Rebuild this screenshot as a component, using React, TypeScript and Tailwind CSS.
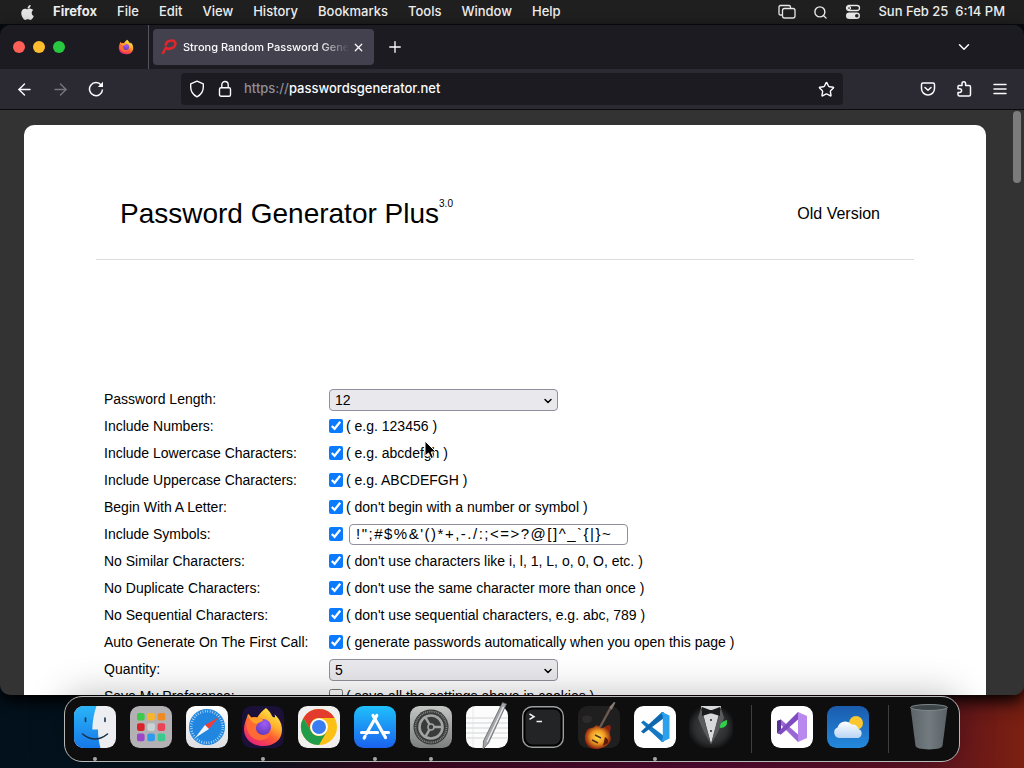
import { useState } from 'react'
import type { ReactNode } from 'react'
import { ArrowLeft, ArrowRight, ChevronDown, Menu, Plus, Search, Star, X } from 'lucide-react'
import { FaApple } from 'react-icons/fa'

const menus = ['File', 'Edit', 'View', 'History', 'Bookmarks', 'Tools', 'Window', 'Help']

function FirefoxLogo({ id, className }: { id: string; className?: string }) {
  return (
    <svg viewBox="0 0 42 42" width="42" height="42" className={className} aria-hidden="true">
      <defs>
        <linearGradient id={`${id}-body`} x1="0.85" y1="0.05" x2="0.25" y2="1">
          <stop offset="0" stopColor="#fff04a" />
          <stop offset="0.35" stopColor="#ffb02e" />
          <stop offset="0.6" stopColor="#ff5a36" />
          <stop offset="1" stopColor="#e6207c" />
        </linearGradient>
        <radialGradient id={`${id}-globe`} cx="0.6" cy="0.3" r="0.8">
          <stop offset="0" stopColor="#a05cf5" />
          <stop offset="1" stopColor="#5a35b8" />
        </radialGradient>
      </defs>
      <path
        d="M24 2c3 3 5 5 6 8 1 1 2 2 3 1 0-1 0-2-1-3 5 4 8 9 8 16 0 10-8 16-19 16S2 33 2 23c0-5 2-9 3-12l1-3c1 1 2 3 2 4 2-1 5-1 7 0 2-4 5-7 9-10z"
        fill={`url(#${id}-body)`}
      />
      <circle cx="21" cy="21" r="8" fill={`url(#${id}-globe)`} />
      <path
        d="M5 13c3-2 8-3 11-1 2 0 4 0 5 2-1 2-4 2-6 4 0 2-1 2-1 4 0 4 3 7 7 7 3 0 6-1 8-4-1 7-7 10-13 9C7 32 3 23 5 13z"
        fill="#ff6a35"
      />
      <path d="M6 8c2 1 3 3 3 4 3-1 6-1 8 0 2 0 3 1 4 2-1 2-4 2-6 4-4-1-8-3-9-10z" fill="#ffa02b" />
    </svg>
  )
}

function MenuBar() {
  return (
    <header className="flex h-6 shrink-0 items-center bg-[#1f1f1f] px-[19px] text-[13px] font-medium text-[#ededed]">
      <FaApple size={17} className="mr-[17px] text-[#e4e4e4]" />
      <nav className="flex gap-5">
        <button className="font-bold">Firefox</button>
        {menus.map((m) => (
          <button key={m}>{m}</button>
        ))}
      </nav>
      <div className="ml-auto flex items-center gap-[17px]">
        <svg width="18" height="16" viewBox="0 0 18 16" fill="none" stroke="#e8e8e8" strokeWidth="1.3">
          <path d="M4 11H2.500Q1 11 1 9.500V3Q1 1.500 2.500 1.500H11Q12.500 1.500 12.500 3V4" />
          <rect x="4.500" y="4.500" width="12.500" height="9.500" rx="2" />
        </svg>
        <Search size={15} strokeWidth={2.2} />
        <svg width="16" height="16" viewBox="0 0 16 16" fill="none" stroke="#e8e8e8" strokeWidth="1.300">
          <rect x="1.500" y="1.500" width="13" height="5" rx="2.500" />
          <circle cx="4" cy="4" r="1.500" />
          <rect x="1" y="8.500" width="14" height="6.500" rx="3.200" fill="#e8e8e8" stroke="none" />
          <circle cx="11.800" cy="11.700" r="1.800" fill="#222" stroke="none" />
        </svg>
        <span className="whitespace-pre">Sun Feb 25  6:14 PM</span>
      </div>
    </header>
  )
}

function TabStrip() {
  return (
    <div className="flex h-11 items-center bg-[#1c1b22] text-[#fbfbfe]">
      <div className="flex gap-2 pl-[13px]">
        <button aria-label="Close window" className="size-3 rounded-full bg-[#fe5f57]" />
        <button aria-label="Minimize window" className="size-3 rounded-full bg-[#febc2e]" />
        <button aria-label="Zoom window" className="size-3 rounded-full bg-[#28c840]" />
      </div>
      <button aria-label="Firefox View" className="ml-[53px] mr-[14px]">
        <FirefoxLogo id="fx-tab" className="size-4" />
      </button>
      <div className="mr-1 h-full w-px bg-[#55545c]" />
      <div className="flex h-9 w-[221px] items-center rounded-sm bg-[#42414d] pl-2">
        <svg width="16" height="16" viewBox="0 0 16 16" fill="none" stroke="#e0262c" strokeWidth="2.600">
          <path d="M1.500 15L5.500 7.500" />
          <path d="M4.500 6.500C5 3 8 1.500 11 1.500S15 4 14 6.500 9 10.500 4.500 9.500" />
        </svg>
        <span className="ml-[6px] w-[166px] overflow-hidden whitespace-nowrap text-[11px] font-medium [mask-image:linear-gradient(to_right,#000_82%,transparent)]">
          Strong Random Password Generator
        </span>
        <button aria-label="Close tab" className="ml-[3px]">
          <X size={13} strokeWidth={2.2} />
        </button>
      </div>
      <button aria-label="New tab" className="ml-3">
        <Plus size={18} strokeWidth={1.8} />
      </button>
      <button aria-label="List all tabs" className="ml-auto mr-[51px]">
        <ChevronDown size={18} strokeWidth={2} />
      </button>
    </div>
  )
}

function ToolButton({ label, children }: { label: string; children: ReactNode }) {
  return (
    <button aria-label={label} className="flex h-8 w-9 items-center justify-center">
      {children}
    </button>
  )
}

function Toolbar() {
  const [url, setUrl] = useState('https://passwordsgenerator.net')
  return (
    <div className="flex h-[41px] items-center border-b border-[#0c0c0d] bg-[#2b2a33] px-[6px] text-[#fbfbfe]">
      <ToolButton label="Back">
        <ArrowLeft size={19} strokeWidth={1.8} />
      </ToolButton>
      <ToolButton label="Forward">
        <ArrowRight size={19} strokeWidth={1.8} className="text-[#76757d]" />
      </ToolButton>
      <ToolButton label="Reload">
        <svg width="16" height="16" viewBox="0 0 16 16" fill="none" stroke="currentColor" strokeWidth="1.500">
          <path d="M13.200 4.200A6.500 6.500 0 1 0 14.500 8.500" />
          <path d="M15 .8V6H9.800z" fill="currentColor" stroke="none" />
        </svg>
      </ToolButton>
      <div className="mx-[67px] flex h-8 flex-1 items-center rounded bg-[#1c1b22] px-2">
        <svg width="16" height="18" viewBox="0 0 16 18" fill="none" stroke="currentColor" strokeWidth="1.400">
          <path d="M8 1.200L14.300 3.800V7C14.300 11.500 12 14.800 8 16.800C4 14.800 1.700 11.500 1.700 7V3.800z" strokeLinejoin="round" />
        </svg>
        <svg width="14" height="18" viewBox="0 0 14 18" fill="none" stroke="currentColor" strokeWidth="1.400" className="ml-[13px]">
          <rect x="1.500" y="7.800" width="11" height="8.400" rx="1.500" />
          <path d="M3.800 7.800V4.700A3.200 3.200 0 0 1 10.200 4.700V7.800" />
        </svg>
        <div className="relative ml-3 flex-1 text-[13px]">
          <input
            aria-label="Address"
            className="w-full bg-transparent font-medium text-transparent caret-white outline-none"
            value={url}
            onChange={(e) => setUrl(e.target.value)}
          />
          <span aria-hidden="true" className="pointer-events-none absolute inset-0 flex items-center font-medium text-[#fbfbfe]">
            <span className="text-[#8f8e96]">{url.slice(0, 8)}</span>
            {url.slice(8)}
          </span>
        </div>
        <button aria-label="Bookmark this page">
          <Star size={17} strokeWidth={2} />
        </button>
      </div>
      <ToolButton label="Save to Pocket">
        <svg width="16" height="16" viewBox="0 0 16 16" fill="none" stroke="currentColor" strokeWidth="1.500" strokeLinecap="round">
          <path d="M3 2H13Q14.500 2 14.500 3.500V7.500A6.500 6.500 0 0 1 1.500 7.500V3.500Q1.500 2 3 2z" />
          <path d="M5 6.500L8 9.300L11 6.500" strokeLinejoin="round" />
        </svg>
      </ToolButton>
      <ToolButton label="Extensions">
        <svg width="16" height="18" viewBox="0 0 16 18" fill="none" stroke="currentColor" strokeWidth="1.500" strokeLinejoin="round">
          <path d="M2 8.500V6.500Q2 5.500 3 5.500H6V3.500A1.800 1.800 0 0 1 9.600 3.500V5.500H13Q14.500 5.500 14.500 7V14.500Q14.500 16 13 16H3.500Q2 16 2 14.500V12.500H3.700A1.900 1.900 0 0 0 3.700 8.700H2z" />
        </svg>
      </ToolButton>
      <ToolButton label="Open application menu">
        <svg width="14" height="12" viewBox="0 0 14 12" stroke="currentColor" strokeWidth="1.500" strokeLinecap="round">
          <path d="M1 1.500H13M1 6H13M1 10.500H13" />
        </svg>
      </ToolButton>
    </div>
  )
}

function Picker({ id, value, options }: { id: string; value: string; options: string[] }) {
  return (
    <div className="relative">
      <select
        id={id}
        defaultValue={value}
        className="block h-[22px] w-[229px] appearance-none rounded border border-[#8f8f9d] bg-[#e9e9ed] pl-[5px] text-[14px] leading-5"
      >
        {options.map((o) => (
          <option key={o}>{o}</option>
        ))}
      </select>
      <ChevronDown size={12} strokeWidth={3} className="pointer-events-none absolute right-1 top-[6px]" />
    </div>
  )
}

const rows = [
  { id: 'numbers', label: 'Include Numbers:', hint: '( e.g. 123456 )' },
  { id: 'lowercase', label: 'Include Lowercase Characters:', hint: '( e.g. abcdefgh )' },
  { id: 'uppercase', label: 'Include Uppercase Characters:', hint: '( e.g. ABCDEFGH )' },
  { id: 'begin', label: 'Begin With A Letter:', hint: "( don't begin with a number or symbol )" },
  { id: 'symbols', label: 'Include Symbols:' },
  { id: 'similar', label: 'No Similar Characters:', hint: "( don't use characters like i, l, 1, L, o, 0, O, etc. )" },
  { id: 'duplicate', label: 'No Duplicate Characters:', hint: "( don't use the same character more than once )" },
  { id: 'sequential', label: 'No Sequential Characters:', hint: "( don't use sequential characters, e.g. abc, 789 )" },
  { id: 'auto', label: 'Auto Generate On The First Call:', hint: '( generate passwords automatically when you open this page )' },
]

function Row({ id, label, children }: { id: string; label: string; children: ReactNode }) {
  return (
    <div className="flex h-[27px] items-center whitespace-nowrap">
      <label htmlFor={id} className="w-[225px] shrink-0">{label}</label>
      {children}
    </div>
  )
}

function Check({ id, hint, off }: { id: string; hint?: string; off?: boolean }) {
  return (
    <>
      <input id={id} type="checkbox" defaultChecked={!off} className="mb-[2px] mr-[3px] size-[14px] accent-[#0a7aff]" />
      {hint && <label htmlFor={id}>{hint}</label>}
    </>
  )
}

function GeneratorPage() {
  return (
    <main className="flex min-h-0 flex-1 overflow-hidden bg-[#333333] pr-[3px] font-['Liberation_Sans',Arial,sans-serif] text-black">
      <div className="ml-6 mr-[27px] mt-[15px] flex-1 rounded-t-[10px] bg-white px-18">
        <div className="flex h-[135px] items-center justify-between border-b border-[#dddddd] pl-6 pr-[34px] pt-11">
          <h1 className="text-[28px] leading-8">
            Password Generator Plus<sup className="-top-4 text-[10px]">3.0</sup>
          </h1>
          <a href="#old" className="text-base">Old Version</a>
        </div>
        <form className="pl-2 pt-[126px] text-[14px]" onSubmit={(e) => e.preventDefault()}>
          <Row id="length" label="Password Length:">
            <Picker id="length" value="12" options={['6', '8', '10', '12', '16', '20', '32']} />
          </Row>
          {rows.map((r) => (
            <Row key={r.id} id={r.id} label={r.label}>
              <Check id={r.id} hint={r.hint} />
              {r.id === 'symbols' && (
                <input
                  type="text"
                  aria-label="Symbols"
                  defaultValue={'!";#$%&\'()*+,-./:;<=>?@[]^_`{|}~'}
                  className="ml-[3px] h-[21px] w-[279px] rounded-sm border border-[#8f8f9d] px-[6px] text-[15px] tracking-widest"
                />
              )}
            </Row>
          ))}
          <Row id="quantity" label="Quantity:">
            <Picker id="quantity" value="5" options={['1', '5', '10', '20']} />
          </Row>
          <Row id="save" label="Save My Preference:">
            <Check id="save" off hint="( save all the settings above in cookies )" />
          </Row>
        </form>
      </div>
      <div className="mt-px h-[72px] w-2 shrink-0 rounded-full bg-[#7b7b7b]" />
    </main>
  )
}

function Tile({ name, running, children }: { name: string; running?: boolean; children: ReactNode }) {
  return (
    <button aria-label={name} className="relative size-[42px] shrink-0">
      <svg viewBox="0 0 42 42" className="size-full overflow-visible">{children}</svg>
      {running && <span className="absolute -bottom-[13px] left-[19px] size-1 rounded-full bg-[#a8a8a8]" />}
    </button>
  )
}

const launchpad = ['#3fc94a', '#f7b52c', '#f08a24', '#d8232a', '#c9d3d3', '#ea4257', '#9a48c9', '#2f9bea', '#3cc98e']

function Dock() {
  return (
    <footer className="relative z-10 mx-auto mb-[6px] mt-px flex h-[66px] shrink-0 gap-[14px] rounded-[18px] border border-[#b9b9b9] bg-[#0e0e0f] px-[9px] pt-[9px] shadow-[0_-2px_36px_rgba(0,0,0,0.25)]">
      <svg className="absolute size-0" aria-hidden="true">
        <defs>
          <linearGradient id="finder" x2="0" y2="1"><stop stopColor="#2bb5f8" /><stop offset="1" stopColor="#1678e8" /></linearGradient>
          <linearGradient id="paper" x2="0" y2="1"><stop stopColor="#ffffff" /><stop offset="1" stopColor="#dedee2" /></linearGradient>
          <linearGradient id="store" x2="0" y2="1"><stop stopColor="#1fc0fb" /><stop offset="1" stopColor="#1a62ee" /></linearGradient>
          <linearGradient id="steel" x2="0" y2="1"><stop stopColor="#c4c6c4" /><stop offset="1" stopColor="#7d7f7e" /></linearGradient>
          <radialGradient id="suit" r="0.55"><stop stopColor="#4a4b4c" /><stop offset="0.7" stopColor="#2c2d2e" /><stop offset="1" stopColor="#0e0e0f" /></radialGradient>
          <linearGradient id="sky" x2="0" y2="1"><stop stopColor="#1b5cae" /><stop offset="1" stopColor="#2389dc" /></linearGradient>
          <linearGradient id="cloud" x2="0" y2="1"><stop stopColor="#ffffff" /><stop offset="1" stopColor="#b9d6f5" /></linearGradient>
          <linearGradient id="bin"><stop stopColor="#5c6468" /><stop offset="0.5" stopColor="#727b7f" /><stop offset="1" stopColor="#596165" /></linearGradient>
          <radialGradient id="burst"><stop stopColor="#ffe04e" /><stop offset="0.55" stopColor="#ef9822" /><stop offset="1" stopColor="#8c2410" /></radialGradient>
        </defs>
      </svg>
      <Tile name="Finder" running>
        <rect width="42" height="42" rx="9.500" fill="#eceef2" />
        <path d="M9.500 0H22.500C20 7 18.500 15 18.300 23.500H24C24 30 25 37 26.500 42H9.500A9.500 9.500 0 0 1 0 32.500V9.500A9.500 9.500 0 0 1 9.500 0z" fill="url(#finder)" />
        <path d="M11.500 12V15.500M31 12V15.500" stroke="#16324c" strokeWidth="1.600" strokeLinecap="round" />
        <path d="M8.500 28Q21 38 33.500 28" fill="none" stroke="#1b2f44" strokeWidth="1.600" strokeLinecap="round" />
      </Tile>
      <Tile name="Launchpad">
        <rect width="42" height="42" rx="9.500" fill="#b3b1b3" />
        {launchpad.map((c, i) => (
          <rect key={c} x={7 + (i % 3) * 10.3} y={7 + Math.floor(i / 3) * 10.3} width="7.600" height="7.600" rx="1.800" fill={c} />
        ))}
      </Tile>
      <Tile name="Safari">
        <rect width="42" height="42" rx="9.500" fill="url(#paper)" />
        <circle cx="21" cy="21" r="18" fill="#2186e0" />
        <circle cx="21" cy="21" r="15.800" fill="none" stroke="#cfe7fb" strokeWidth="2.600" strokeDasharray="0.700 1.780" />
        <path d="M33 11L23 23L19 19z" fill="#ee3e3b" />
        <path d="M9 32L19 19L23 23z" fill="#f3f4f6" />
      </Tile>
      <Tile name="Firefox" running>
        <rect width="42" height="42" rx="9.500" fill="#1b1038" />
        <FirefoxLogo id="fx-dock" />
      </Tile>
      <Tile name="Chrome">
        <rect width="42" height="42" rx="9.500" fill="#f1f0ee" />
        <circle cx="21" cy="21" r="18" fill="#fbc116" />
        <path d="M5.400 12A18 18 0 0 1 36.600 12H21A9 9 0 0 0 13.200 25.500z" fill="#e33b2e" />
        <path d="M5.400 12A18 18 0 0 0 21 39L28.800 25.500A9 9 0 0 1 13.200 25.500z" fill="#219c4b" />
        <circle cx="21" cy="21" r="8.800" fill="#ffffff" />
        <circle cx="21" cy="21" r="7" fill="#3a7df0" />
      </Tile>
      <Tile name="App Store" running>
        <rect width="42" height="42" rx="9.500" fill="url(#store)" />
        <g stroke="#ffffff" strokeWidth="3.200" strokeLinecap="round" fill="none">
          <path d="M22.800 9.500L12.500 27.500M19 9.500L31.500 31.500M7.500 26.500H23.500M28.500 26.500H34.500M11 30.500L10.200 32" />
        </g>
      </Tile>
      <Tile name="System Settings" running>
        <rect width="42" height="42" rx="9.500" fill="url(#steel)" />
        <circle cx="21" cy="21" r="17.500" fill="#393b3b" />
        <circle cx="21" cy="21" r="15.500" fill="none" stroke="#858787" strokeWidth="1.800" strokeDasharray="1 0.900" />
        <circle cx="21" cy="21" r="11.500" fill="none" stroke="#a2a4a4" strokeWidth="2.600" />
        <circle cx="21" cy="21" r="3" fill="none" stroke="#a2a4a4" strokeWidth="1.600" />
        <path d="M24 21H33M19.500 18.400L15 10.600M19.500 23.600L15 31.400" stroke="#a2a4a4" strokeWidth="2.400" />
      </Tile>
      <Tile name="TextEdit">
        <rect width="42" height="42" rx="9.500" fill="#fcfcfc" />
        <path d="M0 12H42M0 17H42M0 22H42M0 27H42M0 32H42" stroke="#c8cace" strokeWidth="0.800" />
        <path d="M7 0V42" stroke="#dedede" strokeWidth="0.600" />
        <path d="M36.500 -3.500L40.500 -2L22.500 37L17 43L17.500 35z" fill="#a3a5a8" stroke="#5e6063" strokeWidth="0.800" />
        <path d="M37.500 1L21 36" stroke="#eeeeee" strokeWidth="1.200" />
      </Tile>
      <Tile name="Terminal">
        <rect x="0.700" y="0.700" width="40.600" height="40.600" rx="9.500" fill="#000000" stroke="#9c9ea0" strokeWidth="1.400" />
        <rect x="3.500" y="3.500" width="35" height="35" rx="7" fill="#232425" />
        <path d="M7.500 8L12 10.700L7.500 13.400M14.500 15.500H20" fill="none" stroke="#f2f2f2" strokeWidth="1.500" />
      </Tile>
      <Tile name="GarageBand">
        <rect width="42" height="42" rx="9.500" fill="#201f20" />
        <path d="M4 11Q9 8 14 11Q14 17 9 17Q4 17 4 11z" fill="#2d2b2c" />
        <path d="M20 25L33 1" stroke="#6b5a50" strokeWidth="2.400" />
        <path d="M31.500 1L36 -4L37.500 -3.500L36 -0.500L33.500 4z" fill="#8b7c72" />
        <path d="M9 24C12 21 15 23 17 20C19 18 21 20 22 22C25 23 27 20 31 19C35 21 31 25 32 29C36 36 27 43 18 43C8 43 4 32 9 24z" fill="url(#burst)" />
        <path d="M17 29L23 32M14 34L20 37" stroke="#51311c" strokeWidth="1.500" />
        <path d="M27 31Q31 33 30 37L25 40z" fill="#5c1c0c" />
      </Tile>
      <Tile name="Visual Studio Code" running>
        <rect width="42" height="42" rx="9.500" fill="#ffffff" />
        <path d="M7 16.500L9.500 14.500L30 30V35.500L28 36z" fill="#1479c4" />
        <path d="M7 25.500L9.500 27.500L30 12V6.500L28 6z" fill="#0e68b0" />
        <path d="M28 6L35.500 9.500V32.500L28 36L26.500 35C28 34.500 28.800 33 28.800 31V11C28.800 9 28 7.500 26.500 7z" fill="#2ba1ee" />
      </Tile>
      <Tile name="Bartender">
        <rect x="-1" width="44" height="42" rx="14" fill="url(#suit)" />
        <path d="M11 0H31L21 38z" fill="#d8d9da" />
        <path d="M11 2L21 38L14 26L8 12zM31 2L21 38L28 26L34 12z" fill="#5a5b5c" />
        <path d="M12 1L20 4H22L30 1V10L22 7.500H20L12 10z" fill="#1b1b1c" />
        <circle cx="21" cy="14" r="0.900" fill="#111111" />
        <circle cx="21" cy="25" r="0.900" fill="#111111" />
        <path d="M30 22Q29 16 37 14Q38 22 30 22z" fill="#2fd04c" />
      </Tile>
      <div className="mx-[5px] -mt-px h-12 w-px shrink-0 bg-[#3f3f40]" />
      <Tile name="Visual Studio">
        <rect width="42" height="42" rx="9.500" fill="#ffffff" />
        <path d="M6 15L10 13.500L31 32L27 36z" fill="#9a68d4" />
        <path d="M6 15L10 13.500V28.500L6 27z" fill="#573291" />
        <path d="M6 27L27 6L31 10L10 28.500z" fill="#7e4cc0" />
        <path d="M27 6L36 10V32L27 36z" fill="#b988ee" />
        <path d="M27 15V27L19.500 21z" fill="#ffffff" />
      </Tile>
      <Tile name="Weather">
        <rect width="42" height="42" rx="9.500" fill="url(#sky)" />
        <circle cx="29" cy="17" r="7" fill="#fcc62d" />
        <path d="M12 32A5.500 5.500 0 0 1 10.500 21.500A8 8 0 0 1 24.500 18.500A6.500 6.500 0 0 1 31.500 23A4.700 4.700 0 0 1 31 32z" fill="url(#cloud)" />
      </Tile>
      <div className="mx-[5px] -mt-px h-12 w-px shrink-0 bg-[#3f3f40]" />
      <Tile name="Trash">
        <path d="M2.500 1L7.500 40Q8 43 21 43.500Q34 43 34.500 40L39.500 1z" fill="url(#bin)" />
        <ellipse cx="21" cy="1.500" rx="18.500" ry="3" fill="#3e4548" stroke="#7f878b" strokeWidth="1" />
      </Tile>
    </footer>
  )
}

export default function App() {
  return (
    <div className="relative flex h-screen flex-col overflow-hidden bg-[linear-gradient(to_bottom,#080a12_60%,transparent_95%),linear-gradient(to_right,#02111c_0%,#05151f_24%,#3a0820_38%,#500a30_70%,#5c1222_90%,#7c2010_100%)] font-[Inter,'Liberation_Sans',sans-serif]">
      <MenuBar />
      <div className="mt-px flex min-h-0 flex-1 flex-col overflow-hidden rounded-[10px] shadow-[0_6px_16px_#000]">
        <TabStrip />
        <Toolbar />
        <GeneratorPage />
      </div>
      <Dock />
      {/* mouse pointer */}
      <svg className="pointer-events-none absolute left-[424px] top-[440px] z-20" width="14" height="20" viewBox="0 0 14 20" aria-hidden="true">
        <path d="M1 1V16L4.500 13L7 18.500L9.500 17.500L7.200 12H12z" fill="#000000" stroke="#ffffff" strokeWidth="1" />
      </svg>
    </div>
  )
}
